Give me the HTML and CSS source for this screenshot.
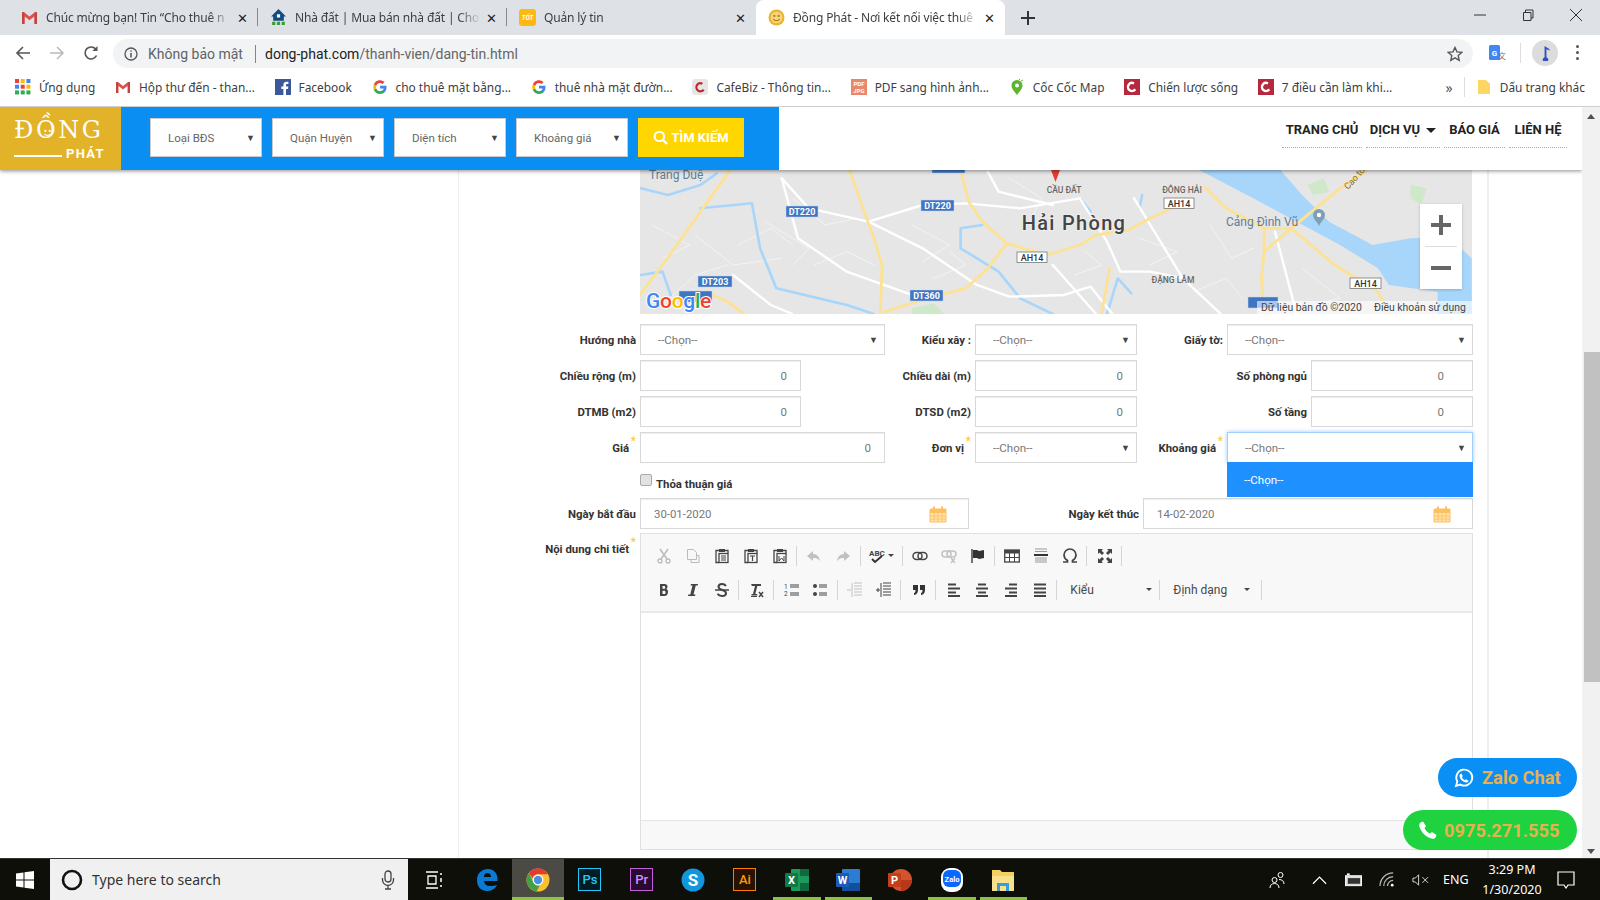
FILE: index.html
```html
<!DOCTYPE html>
<html lang="vi">
<head>
<meta charset="utf-8">
<title>Đồng Phát - Nơi kết nối việc thuê</title>
<link rel="stylesheet" href="styles.css">
</head>
<body>
<svg class="defs" aria-hidden="true">
  <symbol id="gmail" viewBox="0 0 16 16"><path d="M1 3h2l5 4 5-4h2v11h-2.500V7L8 10.500 3.500 7v7H1z" fill="#d9534a"/><path d="M1 3h2v11H1zM13 3h2v11h-2z" fill="#c5433a"/></symbol>
  <symbol id="house" viewBox="0 0 16 16"><path d="M8 0 1 7h2v4h10V7h2z" fill="#0f4c81"/><rect x="6.500" y="5" width="3" height="3" fill="#fff"/><path d="M2 12h3v3H2zM6.500 12h3v3h-3zM11 12h3v3h-3z" fill="#3d9b35"/></symbol>
  <symbol id="smiley" viewBox="0 0 16 16"><circle cx="8" cy="8" r="7.500" fill="#e9b42e"/><circle cx="8" cy="8" r="5.500" fill="#f6d678"/><circle cx="6" cy="6.500" r="1" fill="#a8791b"/><circle cx="10" cy="6.500" r="1" fill="#a8791b"/><path d="M5 9.500c1.500 2 4.500 2 6 0" fill="none" stroke="#a8791b"/></symbol>
  <symbol id="gg" viewBox="0 0 16 16"><path d="M14.500 8.200c0-.500 0-1-.100-1.400H8v2.700h3.700a3.200 3.200 0 0 1-1.400 2.100v1.700h2.200c1.300-1.200 2-3 2-5.100z" fill="#4285f4"/><path d="M8 15c1.900 0 3.400-.600 4.500-1.700l-2.200-1.700c-.600.400-1.400.700-2.300.700-1.800 0-3.300-1.200-3.800-2.800H1.900v1.800A7 7 0 0 0 8 15z" fill="#34a853"/><path d="M4.200 9.500a4.200 4.200 0 0 1 0-2.800V4.900H1.900a7 7 0 0 0 0 6.400z" fill="#fbbc05"/><path d="M8 3.900c1 0 1.900.300 2.600 1l2-2A7 7 0 0 0 1.900 4.900l2.300 1.800C4.700 5.100 6.200 3.900 8 3.900z" fill="#ea4335"/></symbol>
  <symbol id="cc" viewBox="0 0 16 16"><rect width="16" height="16" fill="#b5283d"/><circle cx="8" cy="8" r="4" fill="none" stroke="#fff" stroke-width="2.400" stroke-dasharray="18 7" transform="rotate(35 8 8)"/></symbol>
  <symbol id="cafe" viewBox="0 0 16 16"><rect width="16" height="16" rx="3" fill="#e5e5e5"/><circle cx="8.500" cy="8" r="4" fill="none" stroke="#c0272d" stroke-width="2.200" stroke-dasharray="18 7" transform="rotate(35 8 8)"/></symbol>
  <symbol id="coccoc" viewBox="0 0 16 16"><path d="M8 16C5 12 2.500 9.500 2.500 6.500a5.500 5.500 0 0 1 11 0C13.500 9.500 11 12 8 16z" fill="#5cb531"/><circle cx="8" cy="6.500" r="2" fill="#fff"/><path d="m10 1 1-1M12 2l2-1" stroke="#5cb531"/></symbol>
  <symbol id="fb" viewBox="0 0 16 16"><rect width="16" height="16" fill="#3b5998"/><path d="M11 16v-6h2l.300-2.400H11V6c0-.700.200-1.100 1.100-1.100h1.300V2.800c-.300 0-1-.100-1.900-.100-1.900 0-3.100 1.100-3.100 3.200v1.700H6.300V10h2.100v6z" fill="#fff"/></symbol>
  <symbol id="cal" viewBox="0 0 18 18"><path d="M1 4h16v13H1z" fill="#ffe3ab" stroke="#fdbf60"/><path d="M1 4h16v4H1z" fill="#fdbf60"/><path d="M5 1.500v4M13 1.500v4" stroke="#fdbf60" stroke-width="2"/><path d="M1 11h16M1 14h16M5 8v9M9 8v9M13 8v9" stroke="#fdbf60" stroke-width=".8"/></symbol>
  <symbol id="phone" viewBox="0 0 20 20"><path d="M5 1.500 8 6 6.500 8.200c1 2 3 4.200 5.300 5.300L14 12l4.500 3-1 2.500c-1 1.500-3 1.500-5 .800C7.500 16.500 3.500 12.500 1.700 7.500 1 5.500 1 3.500 2.500 2.500z" fill="#fff"/></symbol>
  <symbol id="wa" viewBox="0 0 20 20"><path d="M2 18l1.300-4.500a8 8 0 1 1 3.100 3.100z" fill="none" stroke="#fff" stroke-width="1.800"/><path d="M7.300 5.500 8.800 8 8 9.200c.600 1.300 1.600 2.300 2.900 2.900l1.100-.900 2.500 1.500c-.300 1.300-1.500 2-2.800 1.700C8.500 13.800 6 11.300 5.500 8.300c-.200-1.300.500-2.500 1.800-2.800z" fill="#fff"/></symbol>
  <symbol id="chrome" viewBox="0 0 24 24"><circle cx="12" cy="12" r="11.500" fill="#fbc02d"/><path d="M12 .500a11.500 11.500 0 0 1 10 5.800H12a5.700 5.700 0 0 0-5.400 3.900L2.900 5A11.500 11.500 0 0 1 12 .500z" fill="#e53935"/><path d="M2.900 5l5.100 10a5.700 5.700 0 0 0 5.700 2.500L10.500 23.400A11.500 11.500 0 0 1 2.900 5z" fill="#43a047"/><circle cx="12" cy="12" r="5.400" fill="#fff"/><circle cx="12" cy="12" r="4.200" fill="#4a90e2"/></symbol>
</svg>

<div class="tabs">
  <div class="tab"><svg class="fav"><use href="#gmail"/></svg><span class="tab-title">Chúc mừng bạn! Tin “Cho thuê n</span><span class="tab-x">✕</span></div>
  <div class="tab tab-sep"><svg class="fav"><use href="#house"/></svg><span class="tab-title">Nhà đất | Mua bán nhà đất | Cho</span><span class="tab-x">✕</span></div>
  <div class="tab tab-sep"><svg class="fav" viewBox="0 0 16 16"><rect width="16" height="16" rx="3" fill="#fdb913"/><text x="8" y="10.500" font-size="6" font-weight="700" font-style="italic" fill="#fff" text-anchor="middle" font-family="Roboto">TỐT</text></svg><span class="tab-title">Quản lý tin</span><span class="tab-x">✕</span></div>
  <div class="tab tab-active"><svg class="fav"><use href="#smiley"/></svg><span class="tab-title">Đồng Phát - Nơi kết nối việc thuê</span><span class="tab-x">✕</span></div>
  <svg class="newtab" viewBox="0 0 14 14"><path d="M7 0v14M0 7h14" stroke="#333" stroke-width="2"/></svg>
  <div class="winctl">
    <svg viewBox="0 0 12 12"><path d="M0 6h12" stroke="#333"/></svg>
    <svg viewBox="0 0 12 12"><path d="M1.500 3.500h7.500v8H1.500zM3.500 3.500V1h7.500v8H9" fill="none" stroke="#333"/></svg>
    <svg viewBox="0 0 12 12"><path d="m0 0 12 12M12 0 0 12" stroke="#333"/></svg>
  </div>
</div>

<div class="toolbar">
  <svg class="nav-ic" viewBox="0 0 16 16"><path d="M15 8H2M8 2 2 8l6 6" fill="none" stroke="#555" stroke-width="1.600"/></svg>
  <svg class="nav-ic" viewBox="0 0 16 16"><path d="M1 8h13M8 2l6 6-6 6" fill="none" stroke="#bbb" stroke-width="1.600"/></svg>
  <svg class="nav-ic" viewBox="0 0 16 16"><path d="M13.500 10.500A6 6 0 1 1 13 4.500" fill="none" stroke="#555" stroke-width="1.600"/><path d="M14.500 1v5h-5z" fill="#555"/></svg>
  <div class="omnibox">
    <svg class="info" viewBox="0 0 14 14"><circle cx="7" cy="7" r="6" fill="none" stroke="#555" stroke-width="1.300"/><path d="M7 6v4.500M7 3.500v1.300" stroke="#555" stroke-width="1.500"/></svg>
    <span class="insecure">Không bảo mật</span><span class="omni-sep"></span>
    <span class="url">dong-phat.com<span class="url-path">/thanh-vien/dang-tin.html</span></span>
    <svg class="star" viewBox="0 0 16 16"><path d="m8 1.500 2 4.400 4.800.500-3.600 3.200 1 4.700L8 11.900l-4.200 2.400 1-4.700L1.200 6.400 6 5.900z" fill="none" stroke="#555" stroke-width="1.400"/></svg>
  </div>
  <svg class="ext" viewBox="0 0 18 18"><rect x="1" y="1" width="11" height="15" rx="1.500" fill="#4285f4"/><text x="6.500" y="11.500" font-size="8" font-weight="700" fill="#fff" text-anchor="middle" font-family="Roboto">G</text><text x="14" y="15" font-size="8" fill="#777" text-anchor="middle" font-family="Noto Sans CJK SC">文</text></svg>
  <span class="tool-sep"></span>
  <span class="avatar"><svg viewBox="0 0 14 18"><path d="M6 14V2c2 2 5 2 6 5-2-1-3.500-1-4-1.500V14a3 3 0 1 1-2 0z" fill="#2b50c8"/></svg></span>
  <span class="dots"><i></i><i></i><i></i></span>
</div>

<div class="bookmarks">
  <div class="bm"><svg class="fav" viewBox="0 0 14 14"><g fill="#e94235"><rect x="0" y="0" width="3.500" height="3.500"/><rect x="5" y="5" width="3.500" height="3.500"/></g><g fill="#fbbc05"><rect x="5" y="0" width="3.500" height="3.500"/><rect x="10" y="5" width="3.500" height="3.500"/></g><g fill="#4285f4"><rect x="10" y="0" width="3.500" height="3.500"/><rect x="0" y="5" width="3.500" height="3.500"/></g><g fill="#34a853"><rect x="0" y="10" width="3.500" height="3.500"/><rect x="5" y="10" width="3.500" height="3.500"/><rect x="10" y="10" width="3.500" height="3.500"/></g></svg>Ứng dụng</div>
  <div class="bm"><svg class="fav"><use href="#gmail"/></svg>Hộp thư đến - than...</div>
  <div class="bm"><svg class="fav"><use href="#fb"/></svg>Facebook</div>
  <div class="bm"><svg class="fav"><use href="#gg"/></svg>cho thuê mặt bằng...</div>
  <div class="bm"><svg class="fav"><use href="#gg"/></svg>thuê nhà mặt đườn...</div>
  <div class="bm"><svg class="fav"><use href="#cafe"/></svg>CafeBiz - Thông tin...</div>
  <div class="bm"><svg class="fav" viewBox="0 0 16 16"><rect width="16" height="16" fill="#e9866f"/><text x="8" y="7" font-size="6" font-weight="700" fill="#fff" text-anchor="middle" font-family="Roboto">PDF</text><text x="8" y="14" font-size="6" font-weight="700" fill="#fff" text-anchor="middle" font-family="Roboto">JPG</text></svg>PDF sang hình ảnh...</div>
  <div class="bm"><svg class="fav"><use href="#coccoc"/></svg>Cốc Cốc Map</div>
  <div class="bm"><svg class="fav"><use href="#cc"/></svg>Chiến lược sống</div>
  <div class="bm"><svg class="fav"><use href="#cc"/></svg>7 điều cần làm khi...</div>
  <div class="bm-end">
    <span class="chev">»</span><span class="bm-sep"></span>
    <div class="bm bm-other"><svg class="fav" viewBox="0 0 16 16"><path d="M2 1h8l4 4v10H2z" fill="#fdd663"/></svg>Dấu trang khác</div>
  </div>
</div>

<div class="viewport">
  <div class="page">
    <header class="site-head">
      <a class="logo">
        <span class="logo-top">ĐỒNG<svg class="logo-face" viewBox="0 0 12 12"><circle cx="4" cy="4.500" r="1" fill="#fff"/><circle cx="8" cy="4.500" r="1" fill="#fff"/><path d="M3 7.500c1.500 1.500 4.500 1.500 6 0" fill="none" stroke="#fff"/></svg></span>
        <span class="logo-bottom"><i class="logo-line"></i><b>PHÁT</b></span>
      </a>
      <div class="search">
        <div class="hsel">Loại BĐS<span class="arrow">▼</span></div>
        <div class="hsel">Quận Huyện<span class="arrow">▼</span></div>
        <div class="hsel">Diện tích<span class="arrow">▼</span></div>
        <div class="hsel">Khoảng giá<span class="arrow">▼</span></div>
        <button class="go"><svg viewBox="0 0 16 16"><circle cx="6.800" cy="6.800" r="5" fill="none" stroke="#fff" stroke-width="2.200"/><path d="m10.500 10.500 4.500 4.500" stroke="#fff" stroke-width="2.400"/></svg>TÌM KIẾM</button>
      </div>
      <nav class="menu">
        <a class="m1">TRANG CHỦ</a>
        <a class="m2">DỊCH VỤ <span class="m-caret"></span></a>
        <a class="m3">BÁO GIÁ</a>
        <a class="m4">LIÊN HỆ</a>
      </nav>
    </header>

    <div class="content">
      <main class="main">
        <div class="map">
          <svg class="map-svg" viewBox="0 0 832 144">
            <rect width="832" height="144" fill="#e6e6e6"/>
            <g transform="translate(-10 -5) scale(.542 .3333)" fill="none" stroke-linejoin="round" stroke-linecap="round">
              <path d="M1250 60l30-20 10 40-30 10zM1440 60l30 10-10 50-20-20zM520 430l40-15 20 32h-60z" fill="#cfe8c9"/>
              <path d="M1050 15H1200L1240 90 1290 170 1370 240 1440 220 1510 215 1553 280V447H1490V380L1400 360 1380 310 1310 240 1230 170 1150 100Z" fill="#a8d6fa"/>
              <g stroke="#f3f3f3" stroke-width="1">
                <path vector-effect="non-scaling-stroke" d="M300 100 360 180 420 160M250 170 330 250 300 300M340 300 400 260 450 300M120 210 190 300 280 280M520 180 590 240 540 290M700 40 760 100 740 160M940 220 1010 260 960 300M1070 180 1110 280 1150 250M1240 310 1310 400 1230 430M60 420 120 330 180 300M200 240 260 190 300 240M560 340 620 300 590 260M1040 380 1100 340 1130 400M40 180 110 240 60 280M840 260 870 300 820 330"/>
              </g>
              <g stroke="#a8d6fa" stroke-width="2.600">
                <path vector-effect="non-scaling-stroke" d="M130 130 225 115 240 250 270 370 400 420 450 447"/>
                <path vector-effect="non-scaling-stroke" d="M650 180 610 190 610 250 680 320 720 400 780 447"/>
                <path vector-effect="non-scaling-stroke" d="M20 70 70 90 130 60 160 25"/>
                <path vector-effect="non-scaling-stroke" d="M20 330 60 320 75 390"/>
                <path vector-effect="non-scaling-stroke" d="M880 447 900 340 925 385"/>
                <path vector-effect="non-scaling-stroke" d="M830 100 850 140M945 90 940 130"/>
              </g>
              <g stroke="#fff" stroke-width="2.400">
                <path vector-effect="non-scaling-stroke" d="M280 40 330 130 440 170 540 250 640 360 700 395 800 390 850 365 890 447"/>
                <path vector-effect="non-scaling-stroke" d="M440 170 540 120 620 115 720 130 830 100"/>
                <path vector-effect="non-scaling-stroke" d="M660 20 680 80 780 120"/>
                <path vector-effect="non-scaling-stroke" d="M830 100 880 230 905 320 960 320 1020 340"/>
                <path vector-effect="non-scaling-stroke" d="M930 100 1020 340 1090 447"/>
                <path vector-effect="non-scaling-stroke" d="M780 300 860 447"/>
                <path vector-effect="non-scaling-stroke" d="M280 40 310 220 400 320 520 390"/>
                <path vector-effect="non-scaling-stroke" d="M190 330 260 420 300 447"/>
                <path vector-effect="non-scaling-stroke" d="M1190 200 1230 447"/>
              </g>
              <g stroke="#fde293" stroke-width="2.800">
                <path vector-effect="non-scaling-stroke" d="M18 390 60 300 130 140 185 15"/>
                <path vector-effect="non-scaling-stroke" d="M405 15 430 130 450 220 465 300 462 447"/>
                <path vector-effect="non-scaling-stroke" d="M610 15 625 110 650 170 695 235 660 310 620 370 560 395 470 440"/>
                <path vector-effect="non-scaling-stroke" d="M695 235 770 270 830 240 860 210 920 195 960 160 1000 130 1010 105"/>
                <path vector-effect="non-scaling-stroke" d="M1060 65 1100 130 1170 190 1220 190 1310 70 1360 15"/>
                <path vector-effect="non-scaling-stroke" d="M1170 190 1170 260 1165 340 1170 447"/>
                <path vector-effect="non-scaling-stroke" d="M1220 190 1170 260"/>
                <path vector-effect="non-scaling-stroke" d="M1220 190 1300 300 1380 380 1400 447"/>
                <path vector-effect="non-scaling-stroke" d="M885 310 870 447"/>
                <path vector-effect="non-scaling-stroke" d="M140 380 180 410 210 447"/>
              </g>
            </g>
            <path d="M411 0h9l-4.500 12z" fill="#e53b30"/>
            <g class="shield"><rect x="146" y="36" width="32" height="11"/><text x="162" y="44.500">DT220</text></g>
            <g class="shield"><rect x="281" y="30" width="33" height="11"/><text x="297.500" y="38.500">DT220</text></g>
            <g class="shield"><rect x="292" y="-8" width="33" height="11"/></g>
            <g class="shield"><rect x="58" y="106" width="34" height="11"/><text x="75" y="114.500">DT203</text></g>
            <g class="shield"><rect x="39" y="121" width="33" height="11"/></g>
            <g class="shield"><rect x="270" y="120" width="33" height="11"/><text x="286.500" y="128.500">DT360</text></g>
            <g class="shield"><rect x="608" y="127" width="30" height="11"/></g>
            <g class="ah"><rect x="524" y="28" width="30" height="10.500"/><text x="539" y="36.500">AH14</text></g>
            <g class="ah"><rect x="377" y="82" width="30" height="10.500"/><text x="392" y="90.500">AH14</text></g>
            <g class="ah"><rect x="710" y="108" width="31" height="10.500"/><text x="725.500" y="116.500">AH14</text></g>
            <text class="city" x="434" y="60">Hải Phòng</text>
            <text class="place" x="424" y="23">CẦU ĐẤT</text>
            <text class="place" x="542" y="23">ĐÔNG HẢI</text>
            <text class="place" x="533" y="113">ĐẶNG LÂM</text>
            <text class="poi" x="586" y="56">Cảng Đình Vũ</text>
            <text class="poi" x="9" y="9">Trang Duệ</text>
            <text class="road-name" transform="translate(708 20) rotate(-48)">Cao tốc</text>
            <path d="M679 39a6 6 0 0 1 6 6c0 4-4 6-6 11-2-5-6-7-6-11a6 6 0 0 1 6-6z" fill="#7f9fb5"/><circle cx="679" cy="45" r="2.200" fill="#fff"/>
            <text class="google" x="6" y="138"><tspan fill="#4285f4">G</tspan><tspan fill="#ea4335">o</tspan><tspan fill="#fbbc05">o</tspan><tspan fill="#4285f4">g</tspan><tspan fill="#34a853">l</tspan><tspan fill="#ea4335">e</tspan></text>
            <rect x="617" y="131" width="215" height="13" fill="#fff" fill-opacity=".6"/>
            <text class="attr" x="621" y="140.500">Dữ liệu bản đồ ©2020</text>
            <text class="attr" x="734" y="140.500">Điều khoản sử dụng</text>
          </svg>
          <div class="zoomctl">
            <button><svg viewBox="0 0 20 20"><path d="M10 0v20M0 10h20" stroke="#666" stroke-width="4"/></svg></button>
            <i></i>
            <button><svg viewBox="0 0 20 20"><path d="M0 10h20" stroke="#666" stroke-width="4"/></svg></button>
          </div>
        </div>

        <div class="form">
          <div class="row row-a">
            <label>Hướng nhà</label><div class="sel">--Chọn--<span class="arrow">▼</span></div>
            <label>Kiểu xây :</label><div class="sel">--Chọn--<span class="arrow">▼</span></div>
            <label>Giấy tờ:</label><div class="sel">--Chọn--<span class="arrow">▼</span></div>
          </div>
          <div class="row row-b">
            <label>Chiều rộng (m)</label><input class="num" value="0">
            <label>Chiều dài (m)</label><input class="num" value="0">
            <label>Số phòng ngủ</label><input class="num num3" value="0">
          </div>
          <div class="row row-b">
            <label>DTMB (m2)</label><input class="num" value="0">
            <label>DTSD (m2)</label><input class="num" value="0">
            <label>Số tầng</label><input class="num num3" value="0">
          </div>
          <div class="row row-a">
            <label class="req">Giá</label><input class="num" value="0">
            <label class="req">Đơn vị</label><div class="sel">--Chọn--<span class="arrow">▼</span></div>
            <label class="req">Khoảng giá</label>
            <div class="sel sel-open">--Chọn--<span class="arrow">▼</span>
              <div class="drop">--Chọn--</div>
            </div>
          </div>
          <div class="check-row"><input type="checkbox" class="chk"><span>Thỏa thuận giá</span></div>
          <div class="row row-d">
            <label>Ngày bắt đầu</label><div class="date">30-01-2020<svg><use href="#cal"/></svg></div>
            <label>Ngày kết thúc</label><div class="date">14-02-2020<svg><use href="#cal"/></svg></div>
          </div>
          <div class="row-e">
            <label class="req">Nội dung chi tiết</label>
            <div class="editor">
              <div class="cke-top">
                <div class="cke-row">
                  <span class="b off"><svg viewBox="0 0 16 16"><path d="m4 1 7 10M12 1 5 11" stroke="#333" stroke-width="1.500"/><circle cx="4" cy="13" r="2" fill="none" stroke="#333" stroke-width="1.300"/><circle cx="12" cy="13" r="2" fill="none" stroke="#333" stroke-width="1.300"/></svg></span>
                  <span class="b off"><svg viewBox="0 0 16 16"><path d="M2.500 1.500h6l3 3v7h-9zM6 11.500v3h8v-7h-2.500" fill="none" stroke="#333"/></svg></span>
                  <span class="b"><svg viewBox="0 0 16 16"><path d="M5 2.500H2v12h3M11 2.500h3v3" fill="none" stroke="#444" stroke-width="1.300"/><rect x="5" y="5.500" width="9" height="9" fill="none" stroke="#444" stroke-width="1.300"/><rect x="5" y="1" width="6" height="3" fill="#444"/><path d="M7 8h5M7 10h5M7 12h5" stroke="#444"/></svg></span>
                  <span class="b"><svg viewBox="0 0 16 16"><path d="M5 2.500H2v12h3M11 2.500h3v3" fill="none" stroke="#444" stroke-width="1.300"/><rect x="5" y="5.500" width="9" height="9" fill="none" stroke="#444" stroke-width="1.300"/><rect x="5" y="1" width="6" height="3" fill="#444"/><path d="M7 8h5M9.500 8v5" stroke="#444" stroke-width="1.200"/></svg></span>
                  <span class="b"><svg viewBox="0 0 16 16"><path d="M5 2.500H2v12h3M11 2.500h3v3" fill="none" stroke="#444" stroke-width="1.300"/><rect x="5" y="5.500" width="9" height="9" fill="none" stroke="#444" stroke-width="1.300"/><rect x="5" y="1" width="6" height="3" fill="#444"/><path d="M7 8v5l2.500-3 2.500 3V8" fill="none" stroke="#444"/></svg></span>
                  <span class="s"></span>
                  <span class="b off"><svg viewBox="0 0 16 16"><path d="M7 3 1 8l6 5v-3c3 0 5 .500 7 3-.500-4-3-7-7-7z" fill="#444"/></svg></span>
                  <span class="b off"><svg viewBox="0 0 16 16"><path d="m9 3 6 5-6 5v-3c-3 0-5 .500-7 3 .500-4 3-7 7-7z" fill="#444"/></svg></span>
                  <span class="s"></span>
                  <span class="b bw"><svg class="w" viewBox="0 0 26 16"><text x="0" y="7.500" font-size="8" font-weight="700" fill="#444" font-family="Roboto">ABC</text><path d="m3 11 3 3 7-6" fill="none" stroke="#333" stroke-width="2"/><path d="m19 6h6l-3 3z" fill="#444"/></svg></span>
                  <span class="s"></span>
                  <span class="b"><svg viewBox="0 0 16 16"><rect x="1" y="4.500" width="9" height="7" rx="3.500" fill="none" stroke="#444" stroke-width="1.500"/><rect x="6" y="4.500" width="9" height="7" rx="3.500" fill="none" stroke="#444" stroke-width="1.500"/></svg></span>
                  <span class="b off"><svg viewBox="0 0 16 16"><rect x="1" y="3" width="9" height="6" rx="3" fill="none" stroke="#444" stroke-width="1.500"/><rect x="6" y="3" width="9" height="6" rx="3" fill="none" stroke="#444" stroke-width="1.500"/><path d="m10 10 4 5M14 10l-4 5" stroke="#444" stroke-width="1.400"/></svg></span>
                  <span class="b"><svg viewBox="0 0 16 16"><path d="M2 1v14" stroke="#444" stroke-width="1.500"/><path d="M3 2h4l2 1 5-1v8l-5 1-2-1H3z" fill="#333"/></svg></span>
                  <span class="s"></span>
                  <span class="b"><svg viewBox="0 0 16 16"><rect x=".700" y="2" width="14.600" height="12" fill="#fff" stroke="#444" stroke-width="1.300"/><rect x="1" y="2" width="14" height="3.500" fill="#444"/><path d="M1 9.500h14M5.500 5v9M10.500 5v9" stroke="#444"/></svg></span>
                  <span class="b"><svg viewBox="0 0 16 16"><path d="M2 1h12M2 3.500h12M2 10h12M2 12h12M2 14h12" stroke="#999"/><path d="M1 7h14" stroke="#333" stroke-width="2"/></svg></span>
                  <span class="b"><svg viewBox="0 0 16 16"><path d="M1 14h4.500v-1.500C3 11 2 9 2 7a6 6 0 0 1 12 0c0 2-1 4-3.500 5.500V14H15" fill="none" stroke="#444" stroke-width="1.700"/></svg></span>
                  <span class="s"></span>
                  <span class="b"><svg viewBox="0 0 16 16"><path d="M1 1h5L4.500 2.500 7 5 5 7 2.500 4.500 1 6zM15 1v5l-1.500-1.500L11 7 9 5l2.500-2.500L10 1zM1 15v-5l1.500 1.500L5 9l2 2-2.500 2.500L6 15zM15 15h-5l1.500-1.500L9 11l2-2 2.500 2.500L15 10z" fill="#444"/></svg></span>
                  <span class="s"></span>
                </div>
                <div class="cke-row">
                  <span class="b"><svg viewBox="0 0 16 16"><path d="M4 2h4.500c2 0 3 1 3 2.800 0 1.200-.600 2-1.500 2.300 1.300.300 2 1.200 2 2.600C12 12 10.800 14 8.500 14H4zm2.500 2v2.800h1.700c.800 0 1-.600 1-1.400S9 4 8.200 4zm0 4.800V12h2c.800 0 1-.700 1-1.600s-.300-1.600-1-1.600z" fill="#444"/></svg></span>
                  <span class="b"><svg viewBox="0 0 16 16"><path d="M6 2h7l-.300 1.500h-2L8.500 12.500h2L10 14H3l.300-1.500h2l2.200-9h-2z" fill="#444"/></svg></span>
                  <span class="b"><svg viewBox="0 0 16 16"><path d="M12 4c-1-1.500-2.500-2-4-2-2 0-3.500 1-3.500 2.800 0 4 7.500 2.500 7.500 6.400C12 13 10 14 8 14c-2 0-3.500-.700-4.500-2.200" fill="none" stroke="#444" stroke-width="2"/><path d="M1 8h14" stroke="#444" stroke-width="1.500"/></svg></span>
                  <span class="s"></span>
                  <span class="b"><svg viewBox="0 0 16 16"><path d="M2 2h10v2H8.300l-2 8h2v1.500H2.500V12H4l2-8H3z" fill="#444"/><path d="M2 14.500h6" stroke="#444"/><path d="m10 10 4 5M14 10l-4 5" stroke="#444" stroke-width="1.500"/></svg></span>
                  <span class="s"></span>
                  <span class="b"><svg viewBox="0 0 16 16"><path d="M6 3h9M6 5h9M6 11h9M6 13h9" stroke="#444"/><text x="0" y="6.500" font-size="6.500" fill="#444" font-family="Roboto">1</text><text x="0" y="14" font-size="6.500" fill="#444" font-family="Roboto">2</text></svg></span>
                  <span class="b"><svg viewBox="0 0 16 16"><circle cx="3" cy="4" r="2" fill="#444"/><circle cx="3" cy="12" r="2" fill="#444"/><path d="M7 3h8M7 5h8M7 11h8M7 13h8" stroke="#444"/></svg></span>
                  <span class="s"></span>
                  <span class="b off"><svg viewBox="0 0 16 16"><path d="M7 1h8M7 4h8M7 7h8M7 10h8M7 13h8M5 1v14" stroke="#444"/><path d="M0 8h4" stroke="#444"/></svg></span>
                  <span class="b"><svg viewBox="0 0 16 16"><path d="M7 1h8M7 4h8M7 7h8M7 10h8M7 13h8M5 1v14" stroke="#444"/><path d="M0 8h4M2 6v4" stroke="#444"/></svg></span>
                  <span class="s"></span>
                  <span class="b"><svg viewBox="0 0 16 16"><path d="M2 3h5v5c0 3-1.500 4.500-4 5V11c1 0 1.500-1 1.500-3H2zM9 3h5v5c0 3-1.500 4.500-4 5V11c1 0 1.500-1 1.500-3H9z" fill="#333"/></svg></span>
                  <span class="s"></span>
                  <span class="b"><svg viewBox="0 0 16 16"><path d="M2 2.500h8M2 6.500h12M2 10.500h8M2 14h12" stroke="#444" stroke-width="2"/></svg></span>
                  <span class="b"><svg viewBox="0 0 16 16"><path d="M4 2.500h8M2 6.500h12M4 10.500h8M2 14h12" stroke="#444" stroke-width="2"/></svg></span>
                  <span class="b"><svg viewBox="0 0 16 16"><path d="M6 2.500h8M2 6.500h12M6 10.500h8M2 14h12" stroke="#444" stroke-width="2"/></svg></span>
                  <span class="b"><svg viewBox="0 0 16 16"><path d="M2 2.500h12M2 6.500h12M2 10.500h12M2 14h12" stroke="#444" stroke-width="2"/></svg></span>
                  <span class="s"></span>
                  <span class="combo combo-k">Kiểu<i></i></span>
                  <span class="s"></span>
                  <span class="combo combo-d">Định dạng<i></i></span>
                  <span class="s"></span>
                </div>
              </div>
              <div class="cke-body"></div>
              <div class="cke-foot"></div>
            </div>
          </div>
        </div>
      </main>
    </div>
  </div>

  <div class="scrollbar">
    <span class="sb-up"></span>
    <span class="sb-thumb"></span>
    <span class="sb-down"></span>
  </div>

  <a class="float float-zalo"><svg><use href="#wa"/></svg>Zalo Chat</a>
  <a class="float float-phone"><svg><use href="#phone"/></svg>0975.271.555</a>
</div>

<footer class="taskbar">
  <span class="start"><svg viewBox="0 0 18 18"><path d="M0 2.500 7.500 1.500V8.500H0zM8.500 1.300 18 0V8.500H8.500zM0 9.500H7.500V16.500L0 15.500zM8.500 9.500H18V18L8.500 16.700z" fill="#fff"/></svg></span>
  <div class="tsearch">
    <svg class="cortana" viewBox="0 0 22 22"><circle cx="11" cy="11" r="9" fill="none" stroke="#111" stroke-width="2.600"/></svg>
    <span>Type here to search</span>
    <svg class="mic" viewBox="0 0 14 20"><rect x="4" y="1" width="6" height="11" rx="3" fill="none" stroke="#444" stroke-width="1.300"/><path d="M1.500 8v2a5.500 5.500 0 0 0 11 0V8M7 15.500V19M4 19h6" fill="none" stroke="#444" stroke-width="1.300"/></svg>
  </div>
  <div class="tasks">
    <span class="t"><svg viewBox="0 0 20 18"><path d="M1 1h12M1 17h12M3 5h8v8H3z" fill="none" stroke="#fff" stroke-width="1.300"/><path d="M16 2v2M16 7v4M16 14v2" stroke="#fff" stroke-width="1.500"/></svg></span>
    <span class="t"><svg class="big" viewBox="0 0 22 24"><path d="M21 17c-2 4-6 6-10 6-6 0-10-4-10-11C1 5 6 1 12 1c6 0 9.500 4.500 9.500 10v2H8c.300 3 2.500 5 6 5 2.500 0 5-.300 7-1zM15 9c0-2.500-1.500-4-3.500-4S8 6.500 7.800 9z" fill="#0a7bd5"/></svg></span>
    <span class="t t-on t-ul"><svg class="big" viewBox="0 0 24 24"><use href="#chrome"/></svg></span>
    <span class="t"><span class="app app-ps">Ps</span></span>
    <span class="t"><span class="app app-pr">Pr</span></span>
    <span class="t"><svg class="big" viewBox="0 0 24 24"><circle cx="12" cy="12" r="11.500" fill="#1296dc"/><text x="12" y="18" font-size="17" font-weight="700" fill="#fff" text-anchor="middle" font-family="Roboto">S</text></svg></span>
    <span class="t"><span class="app app-ai">Ai</span></span>
    <span class="t t-ul"><svg class="big" viewBox="0 0 24 24"><rect x="6" y="1" width="18" height="22" rx="1" fill="#1d9a5b"/><path d="M15 1h9v7h-9zM15 15h9v8h-9z" fill="#0f6b3e"/><rect y="5" width="13" height="14" rx="1" fill="#0f7a45"/><text x="6.500" y="16" font-size="11" font-weight="700" fill="#fff" text-anchor="middle" font-family="Roboto">X</text></svg></span>
    <span class="t t-ul"><svg class="big" viewBox="0 0 24 24"><rect x="6" y="1" width="18" height="22" rx="1" fill="#2b7cd3"/><path d="M6 15h18v8H6z" fill="#124f9e"/><rect y="5" width="13" height="14" rx="1" fill="#1a5bb5"/><text x="6.500" y="16" font-size="11" font-weight="700" fill="#fff" text-anchor="middle" font-family="Roboto">W</text></svg></span>
    <span class="t"><svg class="big" viewBox="0 0 24 24"><circle cx="13" cy="12" r="11" fill="#d35230"/><path d="M13 12h11a11 11 0 0 1-11 11z" fill="#b5391a"/><rect y="5" width="13" height="14" rx="1" fill="#c43e1c"/><text x="6.500" y="16" font-size="11" font-weight="700" fill="#fff" text-anchor="middle" font-family="Roboto">P</text></svg></span>
    <span class="t t-ul"><svg class="big" viewBox="0 0 24 24"><rect x="1" y="0" width="22" height="24" rx="9" fill="#fff"/><rect x="3" y="2" width="18" height="17" rx="6" fill="#0a68ff"/><text x="12" y="13.500" font-size="7.500" font-weight="700" fill="#fff" text-anchor="middle" font-family="Roboto">Zalo</text></svg></span>
    <span class="t t-ul"><svg class="big" viewBox="0 0 24 24"><path d="M1 2h8l2 2h12v19H1z" fill="#f4cf5d"/><path d="M1 8h22v15H1z" fill="#f9e08c"/><path d="M6 15h12v8H6z" fill="#33a0d8"/><path d="M9 18h6v5H9z" fill="#f9e08c"/></svg></span>
  </div>
  <div class="tray">
    <svg class="tr-people" viewBox="0 0 18 18"><circle cx="5.500" cy="9" r="2.500" fill="none" stroke="#fff"/><circle cx="11.500" cy="4" r="2.500" fill="none" stroke="#fff"/><path d="M1 17c0-3 2-4.500 4.500-4.500S10 14 10 17M10 8.500c3 0 5 1.500 5 4.500" fill="none" stroke="#fff"/></svg>
    <svg class="tr-chev" viewBox="0 0 16 10"><path d="m1 9 7-7 7 7" fill="none" stroke="#fff" stroke-width="1.300"/></svg>
    <svg class="tr-bat" viewBox="0 0 18 14"><path d="M2 0h3v2H2z" fill="#fff"/><rect x=".500" y="2.500" width="17" height="10.500" fill="#ddd" stroke="#fff"/><rect x="3" y="5" width="13" height="6" fill="#333"/></svg>
    <svg class="tr-wifi" viewBox="0 0 18 16"><path d="M1 15a14 14 0 0 1 14-14M5 15a10 10 0 0 1 10-10M9 15a6 6 0 0 1 6-6" fill="none" stroke="#bbb" stroke-width="1.300"/><circle cx="14" cy="14" r="1.500" fill="#fff"/></svg>
    <svg class="tr-vol" viewBox="0 0 18 14"><path d="M1 5h2.500L7 1.500v11L3.500 9H1z" fill="none" stroke="#ddd"/><path d="m11 4 6 6M17 4l-6 6" stroke="#ddd"/></svg>
    <span class="tr-eng">ENG</span>
    <span class="tr-time">3:29 PM<br>1/30/2020</span>
    <svg class="tr-note" viewBox="0 0 18 18"><path d="M1 1h16v13h-6l-2 3-2-3H1z" fill="none" stroke="#fff" stroke-width="1.200"/></svg>
  </div>
</footer>
</body>
</html>
```
FILE: styles.css
```css
*{box-sizing:border-box}
html,body{margin:0;padding:0;height:900px;width:1600px;overflow:hidden}
body{display:flex;flex-direction:column;font-family:"Noto Sans",sans-serif;background:#fff;color:#333}
.defs{position:absolute;width:0;height:0;overflow:hidden}
.fav{width:17px;height:17px;flex:none}

/* tabs */
.tabs{height:35px;background:#dee1e6;display:flex;align-items:stretch;padding-left:9px;flex:none}
.tab{width:249px;display:flex;align-items:center;padding:0 10px 0 12px;font-size:12px;color:#3c4043;position:relative}
.tab-sep::before{content:"";position:absolute;left:-1px;top:8px;bottom:9px;width:1px;background:#888}
.tab-active{background:#fff;border-radius:8px 8px 0 0}
.tab-title{flex:1;margin-left:8px;white-space:nowrap;overflow:hidden;margin-right:4px;letter-spacing:-.15px;-webkit-mask-image:linear-gradient(to right,#000 88%,transparent);mask-image:linear-gradient(to right,#000 88%,transparent)}
.tab-x{font-size:13px;width:12px;color:#222;text-align:center}
.newtab{width:14px;height:14px;align-self:center;margin-left:16px}
.winctl{margin-left:auto;display:flex;align-items:center;gap:36px;padding-right:18px;padding-bottom:6px}
.winctl svg{width:12px;height:12px;overflow:visible}

/* toolbar */
.toolbar{height:35px;background:#fff;display:flex;align-items:center;flex:none;padding-left:15px}
.nav-ic{width:16px;height:16px;margin-right:18px;flex:none}
.omnibox{width:1360px;height:29px;margin-left:-4px;background:#f1f3f4;border-radius:15px;display:flex;align-items:center;padding-left:11px;font-size:14px;font-family:Roboto,sans-serif;margin-top:2px}
.info{width:14px;height:14px;flex:none}
.insecure{margin-left:10px;color:#5f6368;width:101px;white-space:nowrap;font-size:14px}
.omni-sep{width:1px;height:18px;background:#80868b;margin:0 9px 0 6px}
.url{color:#222}
.url-path{color:#666}
.star{width:16px;height:16px;margin-left:auto;margin-right:10px}
.ext{width:18px;height:18px;margin-left:15px}
.tool-sep{width:1px;height:20px;background:#ddd;margin-left:14px}
.avatar{width:26px;height:26px;border-radius:50%;background:#dcdcdc;margin-left:11px;display:flex;align-items:center;justify-content:center}
.avatar svg{width:13px;height:17px}
.dots{display:flex;flex-direction:column;gap:3px;margin-left:18px}
.dots i{width:3px;height:3px;border-radius:50%;background:#555}

/* bookmarks */
.bookmarks{height:37px;display:flex;align-items:center;padding:0 15px 2px 15px;font-size:11.900px;gap:19.700px;color:#3c4043;flex:none;border-bottom:1px solid #cfcfcf;white-space:nowrap}
.bm{display:flex;align-items:center;gap:0}
.bm .fav{width:16px;height:16px;margin-right:8px}
.bm-end{margin-left:auto;display:flex;align-items:center}
.chev{font-size:14px;color:#555;margin-right:11px}
.bm-sep{width:1px;height:20px;background:#ddd;margin-right:11px}

/* viewport */
.viewport{flex:1;display:flex;position:relative;overflow:hidden;min-height:0}
.page{flex:1;display:flex;flex-direction:column;min-width:0;overflow:hidden}
.site-head{height:63px;display:flex;flex:none;background:#fff;box-shadow:0 1px 4px rgba(0,0,0,.45);position:relative;z-index:3}
.logo{width:121px;flex:none;background:#e2b229;color:#fff;display:flex;flex-direction:column;padding-left:14px;position:relative}
.logo-top{font-family:"DejaVu Serif",serif;font-size:24px;line-height:28px;letter-spacing:2.600px;margin-top:9px;position:relative;white-space:nowrap}
.logo-face{position:absolute;left:27px;top:10px;width:13px;height:13px}
.logo-bottom{display:flex;align-items:center;margin-top:2px;height:14px}
.logo-line{width:48px;height:2px;background:#fff;margin-right:4px;margin-top:5px}
.logo-bottom b{font-family:Roboto,sans-serif;font-size:13px;letter-spacing:1.300px}
.search{width:658px;background:#0b8ef2;display:flex;align-items:center;gap:10px;padding-left:29px;padding-bottom:2px}
.hsel{width:112px;height:39px;background:#fff;border:1px solid #c9c9c9;display:flex;align-items:center;padding-left:17px;font:11.500px Roboto,sans-serif;color:#666;position:relative}
.arrow{position:absolute;right:6px;top:50%;transform:translateY(-50%);font-size:9px;color:#444}
.go{width:106px;height:39px;background:#ffd600;border:0;color:#fff;font:700 13px Roboto,sans-serif;display:flex;align-items:center;justify-content:center;gap:3px;padding:0}
.go svg{width:15px;height:15px}
.menu{margin-left:auto;display:flex;gap:4px;padding-right:15px;height:41px;font:700 13px Roboto,sans-serif;color:#222;white-space:nowrap}
.menu a{border-bottom:1px dotted #aaa;text-align:center;padding-top:15px;display:block}
.m1{width:80px}.m2{width:74px}.m3{width:61px}.m4{width:58px}
.m-caret{display:inline-block;border:5px solid transparent;border-top-color:#222;border-bottom:0;vertical-align:middle;margin-left:3px}

/* content */
.content{flex:1;padding-left:458px;min-height:0;overflow:hidden}
.main{width:1031px;height:100%;border-left:1px solid #eee;border-right:2px solid #eee;padding-left:181px;overflow:hidden}
.map{width:832px;height:144px;position:relative}
.map-svg{display:block;width:832px;height:144px;font-family:Roboto,sans-serif}
.shield rect{fill:#3f76c4;stroke:#c7d7ee;stroke-width:.5}
.shield text{fill:#fff;font-size:9px;font-weight:700;text-anchor:middle}
.ah rect{fill:#fff;stroke:#777;stroke-width:.8}
.ah text{fill:#333;font-size:9px;font-weight:500;text-anchor:middle}
.city{font-size:20px;fill:#444;text-anchor:middle;font-weight:500;letter-spacing:1.300px;paint-order:stroke;stroke:#eee;stroke-width:2px}
.place{font-size:8.500px;fill:#666;text-anchor:middle;font-weight:500}
.poi{font-size:12px;fill:#5f7f95}
.road-name{font-size:9px;fill:#8a6a20}
.google{font-size:21px;font-weight:500;paint-order:stroke;stroke:#fff;stroke-width:2px;letter-spacing:-.3px}
.attr{font-size:10.400px;fill:#444}
.zoomctl{position:absolute;left:780px;top:34px;width:42px;height:85px;background:#fff;box-shadow:0 1px 3px rgba(0,0,0,.2);display:flex;flex-direction:column;align-items:center}
.zoomctl button{flex:1;width:100%;background:none;border:0;display:flex;align-items:center;justify-content:center;padding:0}
.zoomctl svg{width:20px;height:20px}
.zoomctl i{width:32px;height:1px;background:#ddd}

/* form */
.form{margin-left:-182px;padding-top:10px;font:11.400px Roboto,sans-serif;color:#777}
.row{display:grid;height:31px;margin-bottom:5px;align-items:stretch}
.row-a{grid-template-columns:182px 245px 90px 162px 90px 246px}
.row-b{grid-template-columns:182px 161px 174px 162px 174px 162px}
.row-d{grid-template-columns:182px 329px 174px 330px;margin-bottom:4px}
.row label,.row-e label{display:flex;align-items:center;justify-content:flex-end;padding-right:4px;font-weight:700;color:#333;white-space:nowrap;position:relative}
.req{padding-right:11px!important}
.req::after{content:"*";position:absolute;right:4px;top:2px;color:#f9c83e;font-size:12px;font-weight:400}
.sel,.date,.num{border:1px solid #d8d8d8;box-shadow:inset 0 1px 1px #eee;background:#fff;position:relative;font:11.500px Roboto,sans-serif;color:#777}
.sel{display:flex;align-items:center;padding-left:17px}
.sel .arrow{right:6px}
.num{text-align:right;padding:0 13px 0 0;width:100%;outline:0}
.num3{padding-right:28px}
.date{display:flex;align-items:center;justify-content:space-between;padding:0 21px 0 13px;font-size:11.400px}
.date svg{width:18px;height:18px}
.sel-open{border-color:#9fd0fb;box-shadow:0 0 4px rgba(80,170,250,.6);z-index:1}
.drop{position:absolute;left:-1px;right:-1px;top:100%;height:35px;background:#1e90ff;color:#fff;display:flex;align-items:center;padding-left:17px}
.check-row{height:30px;display:flex;align-items:flex-start;padding-left:182px;font-weight:700;color:#333}
.chk{appearance:none;margin:6px 4px 0 0;width:12px;height:12px;flex:none;background:#e2e2e2;border:1px solid #aaa;border-radius:2px}
.check-row span{margin-top:9px}
.row-e{display:grid;grid-template-columns:182px 833px}
.row-e label{align-items:flex-start;padding-top:9px}
.editor{height:317px;border:1px solid #e0e0e0;display:flex;flex-direction:column;background:#fff}
.cke-top{height:79px;background:#f8f8f8;border-bottom:2px solid #e8e8e8;flex:none;padding:9px 0 0 9px;display:flex;flex-direction:column;gap:9px}
.cke-row{display:flex;align-items:center;height:25px}
.b{width:28.800px;display:flex;justify-content:center;align-items:center;flex:none}
.b svg{width:16px;height:16px}
.b svg.w{width:26px}
.bw{width:36px}
.off{opacity:.3}
.s{width:1px;height:20px;background:#d5d5d5;margin:0 3px 0 2px;flex:none}
.combo{font-size:12px;color:#484848;display:flex;align-items:center;justify-content:space-between;flex:none;padding:0 5px 0 10px;height:20px}
.combo i{border:3px solid transparent;border-top-color:#444;border-bottom:0}
.combo-k{width:97px}
.combo-d{width:96px;padding-right:9px}
.cke-body{flex:1}
.cke-foot{height:29px;background:#f8f8f8;border-top:1px solid #e4e4e4;flex:none}

/* scrollbar */
.scrollbar{width:18px;flex:none;background:#f1f1f1;display:flex;flex-direction:column;align-items:flex-end;position:relative}
.sb-up{align-self:center;margin-top:7px;border:4px solid transparent;border-bottom:5px solid #505050;border-top:0}
.sb-thumb{width:16px;height:330px;background:#c1c1c1;margin-top:233px}
.sb-down{align-self:center;margin-top:auto;margin-bottom:4px;border:4px solid transparent;border-top:5px solid #505050;border-bottom:0}

/* floats */
.float{position:absolute;right:23px;display:flex;align-items:center;color:#e8b04f;font:700 18.300px Roboto,sans-serif;white-space:nowrap}
.float-zalo{bottom:61px;width:139px;height:39px;background:#0a8ff5;border-radius:20px;padding-left:16px;gap:8px}
.float-phone{bottom:8px;width:174px;height:40px;background:#1fd23f;border-radius:20px;padding-left:15px;gap:6px}
.float svg{width:20px;height:20px;flex:none}

/* taskbar */
.taskbar{height:42px;background:#0f0f0a;display:flex;align-items:stretch;flex:none;border-top:1px solid #333}
.start{width:50px;display:flex;align-items:center;justify-content:center;flex:none}
.start svg{width:18px;height:18px}
.tsearch{width:358px;background:#f0f0f0;display:flex;align-items:center;padding:0 13px 0 11px;font-size:14px;color:#333;flex:none}
.cortana{width:22px;height:22px;margin-right:9px}
.mic{width:14px;height:20px;margin-left:auto}
.tasks{display:flex;padding-left:1px}
.t{width:51.700px;display:flex;align-items:center;justify-content:center;position:relative}
.t svg{width:20px;height:20px}
.t svg.big{width:24px;height:24px}
.t-on{background:#4c4a45}
.t-ul::after{content:"";position:absolute;left:2px;right:2px;bottom:0;height:3px;background:#8bc34a}
.t-on::after{left:0;right:0}
.app{width:23px;height:23px;display:flex;align-items:center;justify-content:center;font:500 13px Roboto,sans-serif;background:#1a1a1a;border:1.500px solid}
.app-ps{color:#25c6f5;border-color:#25c6f5;background:#001d26}
.app-pr{color:#d18cff;border-color:#c25ed8;background:#2a0a30}
.app-ai{color:#ff9a00;border-color:#ff7c00;background:#2a1200}
.tray{margin-left:auto;display:flex;align-items:center;color:#fff;font-size:12.500px}
.tray svg{flex:none}
.tr-people{width:18px;height:18px;margin-right:25px}
.tr-chev{width:15px;height:10px;margin-right:18px}
.tr-bat{width:17px;height:14px;margin-right:17px}
.tr-wifi{width:17px;height:15px;margin-right:16px}
.tr-vol{width:17px;height:14px;margin-right:14px}
.tr-eng{margin-right:10px;width:28px}
.tr-time{text-align:center;line-height:20px;width:62px;margin-right:14px}
.tr-note{width:18px;height:18px;margin-right:25px}
```
